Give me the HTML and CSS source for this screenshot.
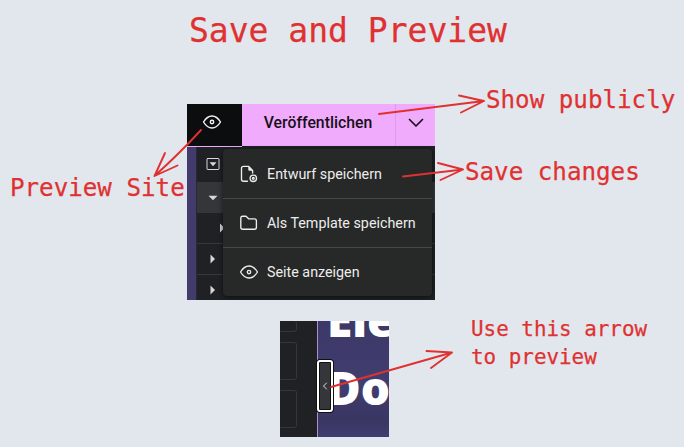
FILE: index.html
```html
<!DOCTYPE html>
<html lang="en">
<head>
<meta charset="utf-8">
<title>Save and Preview</title>
<link rel="stylesheet" href="styles.css">
</head>
<body>
<main class="board">
  <h1 class="note title">Save and Preview</h1>

  <section class="editor">
    <header class="topbar">
      <div class="preview">
        <svg width="20" height="16" viewBox="0 0 20 16"><path d="M1.500 8Q5.200 2 10 2T18.500 8Q14.800 14 10 14T1.500 8Z"/><circle cx="10" cy="8" r="1.700"/></svg>
      </div>
      <div class="publish">Veröffentlichen</div>
      <div class="more"><svg width="16" height="10" viewBox="0 0 16 10"><path d="M1.500 1.500L8 8L14.500 1.500"/></svg></div>
    </header>
    <div class="workspace">
      <div class="canvas-edge"></div>
      <div class="layers">
        <div class="layer first"><svg width="14" height="14" viewBox="0 0 14 14"><rect x="1" y="1.500" width="12" height="11" rx=".5"/><path class="solid" d="M3.500 5.300H10.500L7 9.200Z"/></svg></div>
        <div class="layer active"><svg width="14" height="14" viewBox="0 0 14 14"><path class="solid" d="M2.500 4.800H11.500L7 9.300Z"/></svg></div>
        <div class="layer nested"><svg width="14" height="14" viewBox="0 0 14 14"><path class="solid" d="M3 2.500L7.500 7L3 11.500Z"/></svg></div>
        <div class="layer"><svg width="14" height="14" viewBox="0 0 14 14"><path class="solid" d="M4.500 2.500L9 7L4.500 11.500Z"/></svg></div>
        <div class="layer"><svg width="14" height="14" viewBox="0 0 14 14"><path class="solid" d="M4.500 2.500L9 7L4.500 11.500Z"/></svg></div>
      </div>
    </div>
    <div class="menu">
      <div class="item">
        <svg width="20" height="20" viewBox="0 0 20 20"><path d="M8.500 17.200H4.500Q2.500 17.200 2.500 15.200V4.300Q2.500 2.300 4.500 2.300H9.500L13.600 6.400V9"/><path class="solid" d="M9.300 2.300L13.600 6.800H10.300Q9.300 6.800 9.300 5.800Z"/><circle cx="14.300" cy="14.300" r="3.200"/><circle cx="14.300" cy="14.300" r=".9"/></svg>
        <span>Entwurf speichern</span>
      </div>
      <div class="item">
        <svg width="20" height="20" viewBox="0 0 20 20"><path d="M1.800 5Q1.800 3.200 3.600 3.200H7L9.600 5.800H15.500Q17.400 5.800 17.400 7.700V14.300Q17.400 16.200 15.500 16.200H3.700Q1.800 16.200 1.800 14.300Z"/></svg>
        <span>Als Template speichern</span>
      </div>
      <div class="item">
        <svg width="20" height="20" viewBox="0 0 20 20"><path d="M1.500 10Q5.200 4 10 4T18.500 10Q14.800 16 10 16T1.500 10Z"/><circle cx="10" cy="10" r="1.700"/></svg>
        <span>Seite anzeigen</span>
      </div>
    </div>
  </section>

  <section class="collapse">
    <div class="widgets"><i></i><i></i><i></i></div>
    <div class="page"><p>Ele</p><p>Do</p></div>
    <div class="handle"><svg width="6" height="8" viewBox="0 0 6 8"><path d="M4.500 1L1.500 4L4.500 7"/></svg></div>
  </section>

  <p class="note publicly">Show publicly</p>
  <p class="note changes">Save changes</p>
  <p class="note site">Preview Site</p>
  <p class="note small">Use this arrow<br>to preview</p>

  <svg class="arrows" width="684" height="447" viewBox="0 0 684 447">
    <path d="M379 114L484 101M459 95.500L484 101L461 112.500"/>
    <path d="M403 176.500L463 169.500M438 163L463 169.500L440.500 180"/>
    <path d="M201 130Q180 153 154.500 176M165 153L154.500 176L177.500 165.500"/>
    <path d="M331 387L452 352.500M426.500 351L452 352.500L431 368"/>
  </svg>
</main>
</body>
</html>
```
FILE: styles.css
```css
* { box-sizing: border-box; }
body { margin: 0; }
svg { display: block; fill: none; stroke: currentColor; stroke-linecap: round; stroke-linejoin: round; }
.solid { fill: currentColor; stroke: none; }

.board {
  position: relative;
  width: 684px;
  height: 447px;
  overflow: hidden;
  background: #e2e7ee;
}

/* Handwritten notes pinned on the board */
.note {
  position: absolute;
  margin: 0;
  font: 24.2px/30px "DejaVu Sans Mono", monospace;
  color: #e03131;
  -webkit-text-stroke: .25px #e03131;
  white-space: nowrap;
}
.title { left: 189px; top: 11px; font-size: 33px; line-height: 40px; }
.publicly { left: 486px; top: 85px; }
.changes { left: 465px; top: 157px; }
.site { left: 10px; top: 173px; }
.small { left: 471px; top: 315px; font-size: 20.9px; line-height: 28px; }
.arrows { position: absolute; inset: 0; color: #e03131; stroke-width: 1.9; }

/* Editor panel with the publish menu */
.editor {
  position: absolute;
  left: 187px;
  top: 104px;
  width: 248px;
  height: 196px;
  overflow: hidden;
  background: #202124;
  font-family: Roboto, sans-serif;
}
.topbar { display: flex; height: 42px; background: #f0abfc; }
.preview { width: 55px; height: 43px; padding: 10px 0 0 15px; background: #0c0d0e; color: #f5f5f5; border-bottom: 1px solid #f0abfc; }
.preview svg { stroke-width: 1.4; }
.publish { width: 153px; padding-right: 1px; font-size: 15.8px; line-height: 37px; font-weight: 500; text-align: center; color: #171019; }
.more { flex: 1; padding: 14px 0 0 12px; border-left: 1px solid #dc9bea; color: #171019; }
.more svg { stroke-width: 1.7; }
.workspace { display: flex; height: 154px; }
.canvas-edge { width: 10px; margin-top: 1px; background: #433b6c; border-right: 1px solid #29263b; }
.layers { flex: 1; }
.layer { display: flex; align-items: center; height: 31px; padding-left: 9px; border-bottom: 1px solid #37383b; color: #d5d8dc; }
.layer.first { height: 36px; border: 0; }
.layer.active { background: #35363a; border: 0; }
.layer.nested { padding-left: 20px; }
.menu {
  position: absolute;
  left: 36px;
  top: 45px;
  width: 209px;
  height: 147px;
  border-radius: 4px;
  background: #272828;
  box-shadow: 0 1px 5px #0009;
  color: #ededed;
}
.item { display: flex; align-items: center; gap: 8px; height: 49px; padding-left: 16px; font-size: 14.3px; white-space: nowrap; }
.item + .item { border-top: 1px solid #464747; }
.item svg { stroke-width: 1.35; flex: none; }

/* Panel collapse control */
.collapse {
  position: absolute;
  left: 280px;
  top: 321px;
  width: 109px;
  height: 116px;
  display: flex;
  overflow: hidden;
}
.widgets { width: 37px; background: #202124; }
.widgets i { display: block; width: 17px; height: 38px; margin-bottom: 10px; border: 1px solid #353639; border-left: 0; border-radius: 0 3px 3px 0; }
.widgets i:first-child { height: 11px; border-top: 0; }
.page { flex: 1; padding-left: 9px; border-left: 1px solid #b58bcd; background: linear-gradient(#3c3968, #403d70 55%, #393663 85%, #403d70); overflow: hidden; }
.page p { margin: 0; font: 800 46px/68px "Open Sans", sans-serif; color: #fff; white-space: nowrap; }
.page p:first-child { margin-top: -36px; }
.handle {
  position: absolute;
  left: 37px;
  top: 39px;
  width: 16px;
  height: 52px;
  display: grid;
  place-items: center;
  border: 2px solid #fff;
  border-radius: 3px;
  box-shadow: 0 0 0 1px #111, inset 0 0 0 1px #111;
  background: #35363a;
  color: #ddd;
}
```
